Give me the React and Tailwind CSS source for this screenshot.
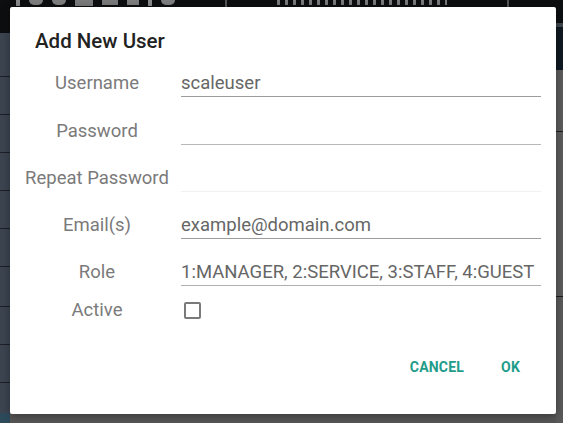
import React from "react";

const font = { fontFamily: "Roboto, 'Noto Sans', Arial, sans-serif" };

function Field({ label, value, line }) {
  return (
    <div className="flex items-end h-[47.3px]">
      <div className="w-[146px] ml-[14px] text-center text-[18.5px] leading-[26px] text-[#7a7a7a] whitespace-nowrap pb-[1px]">
        {label}
      </div>
      <div className={`ml-[11px] flex-1 h-[27px] text-[18.5px] leading-[26px] text-[#666666] whitespace-nowrap border-b ${line}`}>
        {value}
      </div>
    </div>
  );
}

export default function App() {
  return (
    <div className="relative w-[563px] h-[423px] overflow-hidden bg-[#545454]" style={font}>
      {/* dimmed app behind the dialog */}
      <div className="flex w-full h-full">
        <div className="w-[10px] flex flex-col">
          <div className="h-[33px] bg-[#0d0e10]" />
          <div className="flex-1 bg-[#3c4450] flex flex-col">
            <div className="h-[44px] border-b border-[#1c2026]" />
            <div className="h-[38px] border-b border-[#1c2026]" />
            <div className="h-[38px] border-b border-[#1c2026]" />
            <div className="h-[38px] border-b border-[#1c2026]" />
            <div className="h-[38px] border-b border-[#1c2026]" />
            <div className="h-[38px] border-b border-[#1c2026]" />
            <div className="h-[40px] border-b border-[#1c2026]" />
            <div className="h-[38px] border-b border-[#1c2026]" />
            <div className="h-[38px] border-b border-[#1c2026]" />
          </div>
          <div className="h-[10px] bg-[#2d4a5a]" />
        </div>
        <div className="flex-1 flex flex-col">
          {/* header strip: lower edges of large heading glyphs peeking out */}
          <div className="h-[33px] bg-[#0d0e10] flex items-start gap-[10px] pl-[6px]">
            <div className="flex gap-[9px] blur-[0.6px]">
              <div className="w-[4px] h-[6px] bg-[#8a8a8a]" />
              <div className="w-[14px] h-[5px] rounded-b-full bg-[#7e7e7e]" />
              <div className="w-[14px] h-[5px] rounded-b-full bg-[#7e7e7e]" />
              <div className="w-[18px] h-[6px] bg-[#7a7a7a]" />
              <div className="w-[16px] h-[5px] bg-[#7a7a7a]" />
              <div className="w-[12px] h-[5px] bg-[#7e7e7e]" />
              <div className="w-[4px] h-[6px] bg-[#8a8a8a]" />
              <div className="w-[14px] h-[5px] rounded-b-full bg-[#7e7e7e]" />
            </div>
            <div className="ml-[40px] w-[2px] h-[7px] bg-[#555]" />
            <div className="ml-[40px] w-[170px] h-[5px] bg-[repeating-linear-gradient(90deg,#7a7a7a_0_3px,transparent_3px_8px)] blur-[0.5px]" />
            <div className="ml-[50px] w-[2px] h-[7px] bg-[#555]" />
          </div>
          <div className="flex-1 bg-[#555555]" />
        </div>
        <div className="w-[7px] flex flex-col">
          <div className="h-[23px] bg-[#0d0e10]" />
          <div className="h-[4px] bg-[#3e454d]" />
          <div className="h-[43px] bg-[#0f1922]" />
          <div className="h-[62px] bg-[#5c5c5c] border-b border-[#1e1e1e]" />
          <div className="h-[165px] bg-[#5c5c5c] border-b border-[#1e1e1e]" />
          <div className="flex-1 bg-[#5a5a5a]" />
        </div>
      </div>

      {/* Add New User dialog */}
      <div className="absolute left-[10px] top-[7px] w-[546px] h-[407px] bg-white rounded-[2px] shadow-[0_2px_8px_rgba(0,0,0,0.35)] flex flex-col">
        <div className="h-[43px] pt-[25px] pl-[25px]">
          <div className="text-[20.5px] leading-[18px] font-medium text-[#222222]">Add New User</div>
        </div>
        <div className="flex flex-col pr-[15px]">
          <Field label="Username" value="scaleuser" line="border-[#9c9c9c]" />
          <Field label="Password" value="" line="border-[#b8b8b8]" />
          <Field label="Repeat Password" value="" line="border-[#f1f1f1]" />
          <Field label="Email(s)" value="example@domain.com" line="border-[#9c9c9c]" />
          <Field label="Role" value="1:MANAGER, 2:SERVICE, 3:STAFF, 4:GUEST" line="border-[#b0b0b0]" />
        </div>
        <div className="flex items-center h-[48px]">
          <div className="w-[146px] ml-[14px] text-center text-[18.5px] leading-[26px] text-[#7a7a7a]">Active</div>
          <div className="ml-[14px] w-[17px] h-[17px] border-2 border-[#7a7a7a] rounded-[2px]" />
        </div>
        <div className="flex items-center justify-end h-[67px] pr-[20px] gap-[5px]">
          <button className="px-[16px] h-[36px] text-[14px] font-bold text-[#1f9c8a] tracking-[0.2px]">CANCEL</button>
          <button className="px-[16px] h-[36px] text-[14px] font-bold text-[#1f9c8a] tracking-[0.2px]">OK</button>
        </div>
      </div>
    </div>
  );
}
